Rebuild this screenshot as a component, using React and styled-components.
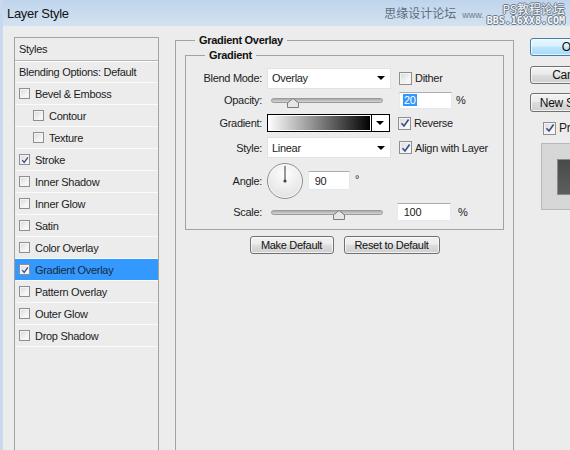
import React from 'react';
import styled, { createGlobalStyle } from 'styled-components';

const FONT = `'Liberation Sans', Arial, sans-serif`;

const Global = createGlobalStyle`
  html, body { margin: 0; padding: 0; }
  body {
    width: 570px; height: 450px; overflow: hidden;
    background: #ececec;
    font-family: ${FONT};
    font-size: 11px;
    letter-spacing: -0.3px;
    color: #1c1c1c;
  }
  * { box-sizing: border-box; }
`;

const Window = styled.div`
  width: 570px; height: 450px; overflow: hidden;
  display: flex; flex-direction: column;
  background: #ececec;
  border-left: 3px solid #c6d9ee;
`;

const TitleBar = styled.div`
  position: relative;
  flex: none; height: 26px;
  display: flex; align-items: center;
  padding-left: 4px;
  background: linear-gradient(#bfd4eb, #d3e2f2);
  font-size: 13px; color: #111;
`;

const Watermark = styled.div`
  position: absolute; top: 0; right: 5px; height: 26px;
  display: flex; align-items: center;
  font-family: 'Noto Sans CJK SC', sans-serif;
  letter-spacing: 0;
`;
const WmSite = styled.span`
  font-size: 12px; line-height: 14px; color: #5d6f82; margin-right: 6px;
`;
const WmSmall = styled.span`
  font-family: ${FONT}; font-size: 9px; line-height: 10px; color: #6b7c8d; margin-top: 3px;
`;
const WmStack = styled.div`
  display: flex; flex-direction: column; align-items: flex-end;
  margin-left: 3px; padding-top: 1px;
`;
const WmTop = styled.span`
  font-size: 12px; color: #f4f7fb; line-height: 14px;
  text-shadow: 1px 0 #6c7a88, -1px 0 #6c7a88, 0 1px #6c7a88, 0 -1px #6c7a88;
`;
const WmBottom = styled.span`
  font-family: 'DejaVu Sans Mono', monospace; font-size: 10px; line-height: 10px;
  color: #f4f7fb; font-weight: bold;
  text-shadow: 1px 0 #6c7a88, -1px 0 #6c7a88, 0 1px #6c7a88, 0 -1px #6c7a88;
`;

const Body = styled.div`
  flex: 1; display: flex; align-items: flex-start; gap: 16px;
  padding-left: 11px;
`;

/* ---------- left list ---------- */
const StyleList = styled.div`
  flex: none; width: 145px; height: 440px; margin-top: 11px;
  border: 1px solid #a3a3a3;
  display: flex; flex-direction: column;
`;
const ListHeader = styled.div`
  height: 23px; display: flex; align-items: center; padding-left: 4px;
  border-bottom: 1px solid #b5b5b5;
  box-shadow: 0 1px 0 #fff;
`;
const ListRow = styled.div`
  height: 22px; display: flex; align-items: center; gap: 5px;
  padding-left: ${p => (p.$indent ? 18 : 4)}px;
  border-bottom: 1px solid #fbfbfb;
  background: ${p => (p.$active ? '#3399ff' : 'transparent')};
  color: ${p => (p.$active ? '#1a2a3a' : '#1c1c1c')};
`;

const CheckBox = styled.span`
  flex: none; width: ${p => p.$size}px; height: ${p => p.$size}px;
  border: 1px solid #8e8f8f;
  background: linear-gradient(135deg, #d8d8d8, #f7f7f7 70%);
  box-shadow: inset 0 0 0 1px #f4f4f4;
  display: flex; align-items: center; justify-content: center;
`;

function Check({ checked, size = 11 }) {
  return (
    <CheckBox $size={size}>
      {checked && (
        <svg width={size - 3} height={size - 3} viewBox="0 0 10 10">
          <path d="M1.5 5.2 L4 8 L8.6 1.6" fill="none" stroke="#3b4f8a" strokeWidth="1.7" />
        </svg>
      )}
    </CheckBox>
  );
}

/* ---------- group box ---------- */
const Group = styled.section`
  flex: none;
  width: ${p => p.$w}px;
  margin-top: ${p => p.$mt}px;
  ${p => (p.$h ? `height: ${p.$h}px;` : '')}
  border: 1px solid #a3a3a3; border-top: none;
  display: flex; flex-direction: column;
  padding: ${p => p.$pad || '0'};
`;
const Caption = styled.div`
  display: flex; align-items: center;
  height: 13px; margin: -6px ${p => p.$mx}px 0;
  font-weight: bold; line-height: 13px; color: #111;
  &::before { content: ''; width: 20px; height: 0; border-top: 1px solid #a3a3a3; margin-right: 4px; }
  &::after { content: ''; flex: 1; height: 0; border-top: 1px solid #a3a3a3; margin-left: 4px; }
`;

const Rows = styled.div`
  display: flex; flex-direction: column; margin-top: 5px; padding-bottom: 6px;
`;
const FormRow = styled.div`
  height: ${p => p.$h}px; display: flex; align-items: center;
`;
const Label = styled.span`
  flex: none; width: 76px; margin-right: 5px; text-align: right;
`;

const Select = styled.div`
  flex: none; width: 124px; height: 21px;
  background: #fff; border: 1px solid #e2e2e2;
  display: flex; align-items: center; justify-content: space-between;
  padding: 0 4px 0 4px;
`;
const Arrow = styled.span`
  width: 0; height: 0;
  border-left: 4px solid transparent; border-right: 4px solid transparent;
  border-top: 4px solid #000;
  margin-right: 1px;
`;

const Side = styled.div`
  display: flex; align-items: center; gap: 3px; margin-left: 8px;
`;

const SliderWrap = styled.div`
  flex: none; width: 124px; height: 17px; position: relative;
  display: flex; align-items: center; padding: 0 8px 0 4px;
`;
const Track = styled.div`
  width: 100%; height: 5px; border-radius: 3px;
  background: linear-gradient(#a9a9a9, #d6d6d6);
  border: 1px solid #9a9a9a;
`;
const Thumb = styled.svg`
  position: absolute; top: 6px; margin-left: -6px;
`;

function Slider({ pct }) {
  return (
    <SliderWrap>
      <Track />
      <Thumb width="12" height="10" viewBox="0 0 12 10" style={{ left: `calc(4px + ${pct} * 112px / 100)` }}>
        <path d="M0.5 9.5 L0.5 5 L6 0.5 L11.5 5 L11.5 9.5 Z" fill="#e6e6e6" stroke="#7b7b7b" />
      </Thumb>
    </SliderWrap>
  );
}

const Input = styled.div`
  flex: none; width: ${p => p.$w}px; height: ${p => p.$h}px;
  margin-left: ${p => p.$ml}px;
  background: #fff;
  border: 1px solid #e3e9ef; border-top-color: #abadb3;
  display: flex; align-items: center; padding-left: 3px;
`;
const Selected = styled.span`
  background: #3399ff; color: #fff; padding: 0 1px;
`;
const Unit = styled.span`
  margin-left: ${p => p.$ml}px;
  ${p => (p.$sup ? 'align-self: flex-start; margin-top: 13px;' : '')}
`;

const GradBox = styled.div`
  flex: none; width: 123px; height: 18px; border: 1px solid #000;
  display: flex; background: #fff;
`;
const GradFill = styled.div`
  flex: 1; border-right: 1px solid #000;
  background: linear-gradient(to right, #fff 0%, #9a9a9a 40%, #000 100%);
  box-shadow: inset 0 0 0 1px #fff;
`;
const GradArrow = styled.div`
  flex: none; width: 17px; display: flex; align-items: center; justify-content: center;
`;

const Dial = styled.div`
  flex: none; width: 36px; height: 36px; border-radius: 50%;
  border: 1px solid #8d8d8d;
  background: radial-gradient(circle at 50% 30%, #ffffff, #e2e2e2 80%);
  box-shadow: inset 0 0 0 1px #fafafa;
  display: flex; justify-content: center;
`;

const ButtonRow = styled.div`
  display: flex; justify-content: center; gap: 10px; margin-top: 6px;
`;
const Button = styled.div`
  flex: none; width: ${p => p.$w}px; height: ${p => p.$h || 18}px;
  margin-top: ${p => p.$mt || 0}px;
  border: 1px solid ${p => (p.$def ? '#3c7fb1' : '#707070')};
  border-radius: 3px;
  background: ${p => (p.$def
    ? 'linear-gradient(#eaf6fd 0%, #d9f0fc 45%, #bee6fd 50%, #a7d9f5 100%)'
    : 'linear-gradient(#f2f2f2 0%, #ebebeb 45%, #dddddd 50%, #cfcfcf 100%)')};
  box-shadow: inset 0 0 0 1px rgba(255,255,255,0.7);
  display: flex; align-items: center; justify-content: center;
  font-size: ${p => p.$fs || 11}px; color: #111;
  white-space: nowrap;
`;

/* ---------- right column ---------- */
const RightCol = styled.div`
  flex: none; width: 80px; margin-top: 12px;
  display: flex; flex-direction: column;
`;
const PreviewCheck = styled.div`
  display: flex; align-items: center; gap: 3px; margin: 9px 0 0 13px; font-size: 12px;
`;
const PreviewBox = styled.div`
  width: 68px; height: 67px; margin: 8px 0 0 11px;
  background: #d7d7d7; border: 1px solid #b9b9b9;
  display: flex; align-items: center; justify-content: center;
`;
const Swatch = styled.div`
  width: 36px; height: 36px; border: 1px solid #8a8a8a;
  background: linear-gradient(#4a4a4a, #5e5e5e);
`;

const items = [
  ['Bevel & Emboss', false, false],
  ['Contour', false, true],
  ['Texture', false, true],
  ['Stroke', true, false],
  ['Inner Shadow', false, false],
  ['Inner Glow', false, false],
  ['Satin', false, false],
  ['Color Overlay', false, false],
  ['Gradient Overlay', true, false, true],
  ['Pattern Overlay', false, false],
  ['Outer Glow', false, false],
  ['Drop Shadow', false, false],
];

export default function App() {
  return (
    <>
      <Global />
      <Window>
        <TitleBar>
          Layer Style
          <Watermark>
            <WmSite>思缘设计论坛</WmSite>
            <WmSmall>www.</WmSmall>
            <WmStack>
              <WmTop>PS教程论坛</WmTop>
              <WmBottom>BBS.16XX8.COM</WmBottom>
            </WmStack>
          </Watermark>
        </TitleBar>
        <Body>
          <StyleList>
            <ListHeader>Styles</ListHeader>
            <ListRow>Blending Options: Default</ListRow>
            {items.map(([name, checked, indent, active]) => (
              <ListRow key={name} $indent={indent} $active={active}>
                <Check checked={checked} />
                {name}
              </ListRow>
            ))}
          </StyleList>

          <Group $w={339} $mt={14} $h={440} $pad="0 9px">
            <Caption $mx={-10}>Gradient Overlay</Caption>
            <Group $w={319} $mt={8}>
              <Caption $mx={-1}>Gradient</Caption>
              <Rows>
                <FormRow $h={22}>
                  <Label>Blend Mode:</Label>
                  <Select>Overlay<Arrow /></Select>
                  <Side><Check size={13} />Dither</Side>
                </FormRow>
                <FormRow $h={22}>
                  <Label>Opacity:</Label>
                  <Slider pct={20} />
                  <Input $w={53} $h={17} $ml={8}><Selected>20</Selected></Input>
                  <Unit $ml={4}>%</Unit>
                </FormRow>
                <FormRow $h={24}>
                  <Label>Gradient:</Label>
                  <GradBox>
                    <GradFill />
                    <GradArrow><Arrow /></GradArrow>
                  </GradBox>
                  <Side><Check size={13} checked />Reverse</Side>
                </FormRow>
                <FormRow $h={25}>
                  <Label>Style:</Label>
                  <Select>Linear<Arrow /></Select>
                  <Side><Check size={13} checked />Align with Layer</Side>
                </FormRow>
                <FormRow $h={41}>
                  <Label>Angle:</Label>
                  <Dial>
                    <svg width="34" height="34" viewBox="0 0 34 34">
                      <line x1="17" y1="17" x2="17" y2="2" stroke="#555" strokeWidth="1.2" />
                      <circle cx="17" cy="17" r="1.6" fill="#444" />
                    </svg>
                  </Dial>
                  <Input $w={42} $h={19} $ml={5}>&nbsp;90</Input>
                  <Unit $ml={5} $sup>°</Unit>
                </FormRow>
                <FormRow $h={22}>
                  <Label>Scale:</Label>
                  <Slider pct={61} />
                  <Input $w={54} $h={18} $ml={6}>&nbsp;100</Input>
                  <Unit $ml={7}>%</Unit>
                </FormRow>
              </Rows>
            </Group>
            <ButtonRow>
              <Button $w={84}>Make Default</Button>
              <Button $w={96}>Reset to Default</Button>
            </ButtonRow>
          </Group>

          <RightCol>
            <Button $w={80} $def $fs={12}>OK</Button>
            <Button $w={80} $fs={12} $mt={10}>Cancel</Button>
            <Button $w={80} $h={19} $fs={12} $mt={9}>New Style...</Button>
            <PreviewCheck><Check size={13} checked />Preview</PreviewCheck>
            <PreviewBox><Swatch /></PreviewBox>
          </RightCol>
        </Body>
      </Window>
    </>
  );
}
